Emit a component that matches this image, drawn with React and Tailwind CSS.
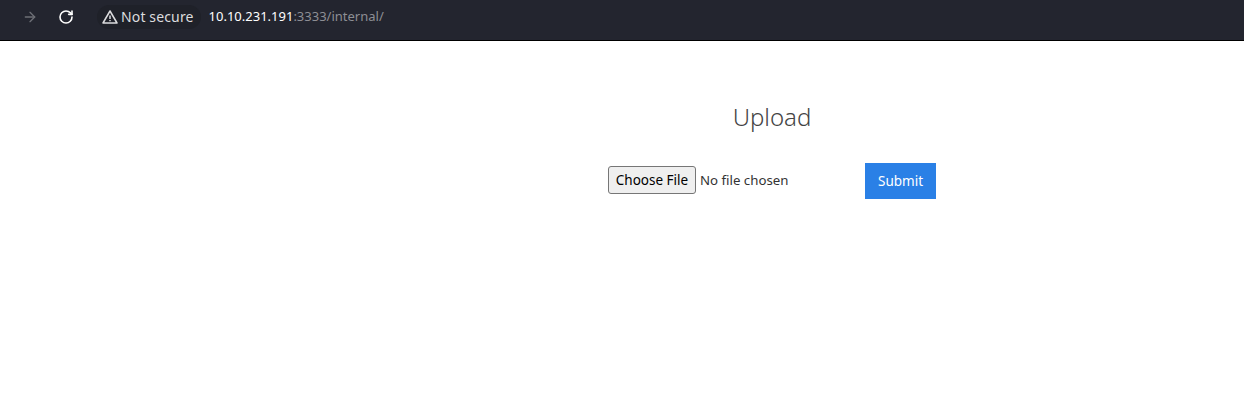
import { RotateCw, ArrowRight } from 'lucide-react';

export default function App() {
  return (
    <div className="h-[400px] bg-white overflow-hidden" style={{ fontFamily: '"Noto Sans", sans-serif' }}>
      {/* Browser bar */}
      <div className="h-[41px] pb-[7px] bg-[#23252f] border-b border-black flex items-center">
        <ArrowRight className="ml-[22px] w-4 h-4 text-[#6d6f76]" strokeWidth={2} />
        <RotateCw className="ml-[20px] w-4 h-4 text-white" strokeWidth={2.4} />
        <div className="ml-[23px] h-[24px] pl-[5px] pr-[7px] rounded-full bg-[#1f2129] flex items-center gap-[3px] text-[14px] text-[#dcdcde]">
          <svg width="16" height="16" viewBox="0 0 16 16" fill="none" stroke="#dcdcde" strokeWidth="1.5" strokeLinejoin="round">
            <path d="M8 2 15 14H1Z" />
            <path d="M8 6.5v3.5M8 11v1.2" />
          </svg>
          <span className="tracking-[0.01em]">Not secure</span>
        </div>
        <div className="ml-[8px] text-[13px] text-white whitespace-nowrap">
          10.10.231.191<span className="text-[#8d8e94]">:3333/internal/</span>
        </div>
      </div>

      {/* Page */}
      <div className="pl-[608px]">
        <div className="w-[328px] pt-[58px]">
          <h1 className="text-center text-[24px] leading-[36px] font-light text-[#444444]">Upload</h1>
          <form className="mt-[28px] flex items-center justify-between">
            <div className="flex items-center">
              <button type="button" className="w-[88px] h-[28px] -mt-[2px] bg-[#efefef] border border-[#767676] rounded-[3px] text-[13.5px] text-black">
                Choose File
              </button>
              <span className="ml-[4px] text-[13.25px] text-[#333]">No file chosen</span>
            </div>
            <button type="button" className="w-[71px] h-[36px] bg-[#2a80e6] text-white text-[13.5px]">
              Submit
            </button>
          </form>
        </div>
      </div>
    </div>
  );
}
